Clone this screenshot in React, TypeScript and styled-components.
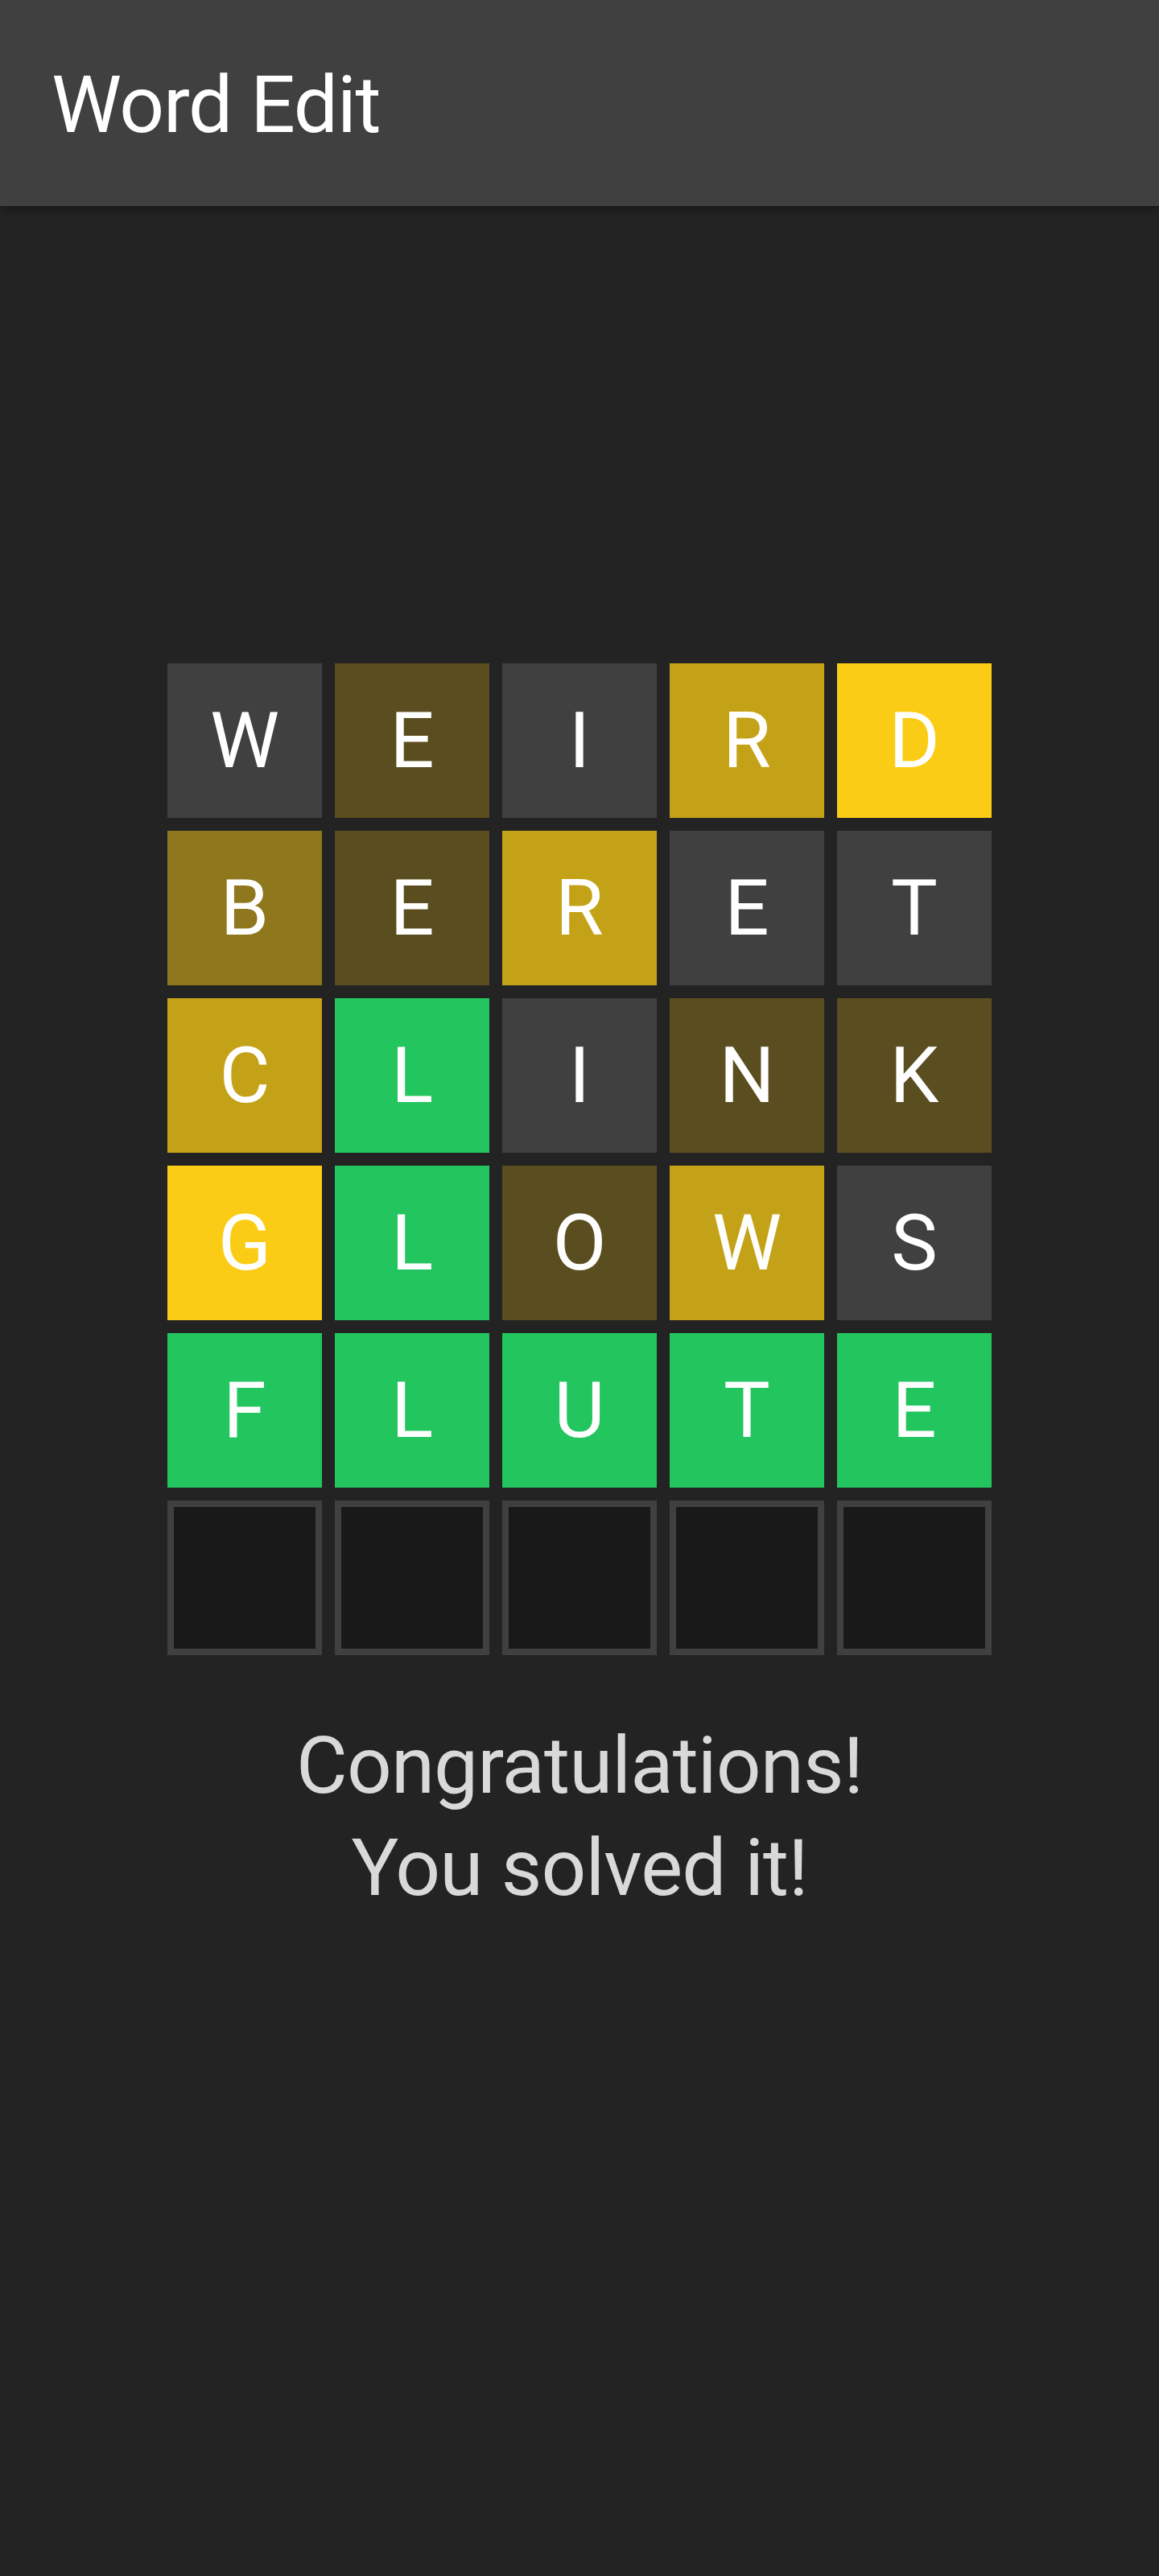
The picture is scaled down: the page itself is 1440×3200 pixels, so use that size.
import React from "react";
import styled, { createGlobalStyle } from "styled-components";

const GlobalStyle = createGlobalStyle`
  html, body {
    margin: 0;
    padding: 0;
    background: #232323;
    font-family: Roboto, "Noto Sans", "Liberation Sans", sans-serif;
  }
  #root {
    min-height: 3200px;
    background: #232323;
  }
`;

const Page = styled.div`
  min-height: 3200px;
  background: #232323;
  display: flex;
  flex-direction: column;
`;

const AppBar = styled.header`
  height: 256px;
  background: #404040;
  display: flex;
  align-items: center;
  padding: 4px 0 0 64px;
  box-sizing: border-box;
  box-shadow: 0 4px 10px rgba(0, 0, 0, 0.35);
  position: relative;
  z-index: 1;
`;

const Title = styled.h1`
  margin: 0;
  font-family: Roboto, sans-serif;
  font-weight: 400;
  font-size: 98px;
  line-height: 115px;
  letter-spacing: -1.2px;
  color: #ffffff;
`;

const Main = styled.main`
  display: flex;
  flex-direction: column;
  align-items: center;
  padding-top: 568px;
`;

const Board = styled.div`
  display: grid;
  grid-template-columns: repeat(5, 192px);
  grid-auto-rows: 192px;
  gap: 16px;
`;

type Kind = "grey" | "y25" | "y50" | "y75" | "y100" | "green" | "empty";

const bg: Record<Kind, string> = {
  grey: "#404040",
  y25: "#5a4d1f",
  y50: "#8e771c",
  y75: "#c4a218",
  y100: "#facc15",
  green: "#22c55e",
  empty: "#191919",
};

const Tile = styled.div<{ $kind: Kind }>`
  box-sizing: border-box;
  width: 192px;
  height: 192px;
  display: flex;
  align-items: center;
  justify-content: center;
  background: ${(p) => bg[p.$kind]};
  border: ${(p) => (p.$kind === "empty" ? "8px solid #404040" : "none")};
  color: #ffffff;
  font-family: Roboto, sans-serif;
  font-size: 97px;
  line-height: 1;
  font-weight: 400;
`;

const Message = styled.p`
  margin: 74px 0 0;
  text-align: center;
  font-family: Roboto, sans-serif;
  font-size: 98px;
  line-height: 127px;
  letter-spacing: -0.9px;
  color: #d9d9d9;
`;

const rows: [string, Kind][][] = [
  [["W", "grey"], ["E", "y25"], ["I", "grey"], ["R", "y75"], ["D", "y100"]],
  [["B", "y50"], ["E", "y25"], ["R", "y75"], ["E", "grey"], ["T", "grey"]],
  [["C", "y75"], ["L", "green"], ["I", "grey"], ["N", "y25"], ["K", "y25"]],
  [["G", "y100"], ["L", "green"], ["O", "y25"], ["W", "y75"], ["S", "grey"]],
  [["F", "green"], ["L", "green"], ["U", "green"], ["T", "green"], ["E", "green"]],
  [["", "empty"], ["", "empty"], ["", "empty"], ["", "empty"], ["", "empty"]],
];

export default function App() {
  return (
    <>
      <GlobalStyle />
      <Page>
        <AppBar>
          <Title>Word Edit</Title>
        </AppBar>
        <Main>
          <Board>
            {rows.flatMap((row, r) =>
              row.map(([letter, kind], c) => (
                <Tile key={`${r}-${c}`} $kind={kind}>
                  {letter}
                </Tile>
              ))
            )}
          </Board>
          <Message>
            Congratulations!
            <br />
            You solved it!
          </Message>
        </Main>
      </Page>
    </>
  );
}
